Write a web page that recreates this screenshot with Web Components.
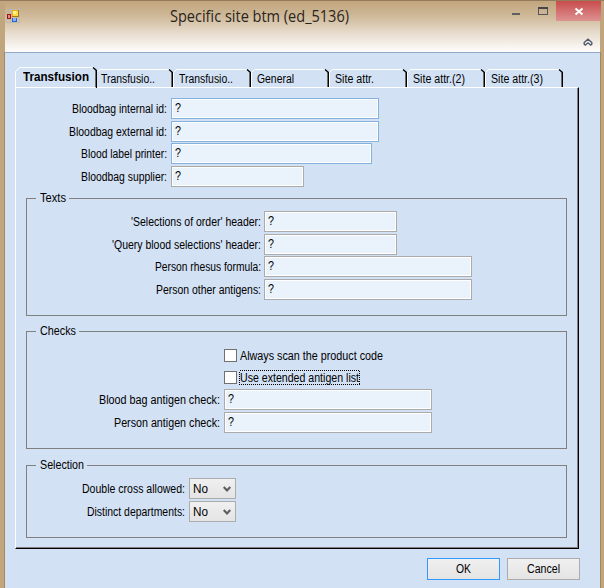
<!DOCTYPE html>
<html lang="en">
<head>
<meta charset="utf-8">
<title>Specific site btm</title>
<style>
html,body{margin:0;padding:0}
body{width:604px;height:588px;overflow:hidden;font:12px/15px "Liberation Sans",Roboto,sans-serif;color:#000}
</style>
</head>
<body>
<app-window></app-window>
<script>
const define=(name,html,init)=>customElements.define(name,class extends HTMLElement{
  constructor(){super();this.attachShadow({mode:'open'});}
  connectedCallback(){
    if(this.shadowRoot.childNodes.length)return;
    const t=document.createElement('template');
    t.innerHTML=typeof html==='function'?html(this):html;
    this.shadowRoot.append(t.content.cloneNode(true));
    if(init)init(this);
  }
});

/* Text condensed or widened to a given pixel width */
define('fit-text',el=>`<style>
:host{display:inline-block;flex:none;white-space:nowrap;text-align:left}
span{display:inline-block;transform-origin:0 50%}
</style><span>${el.getAttribute('text')}</span>`,el=>{
  const s=el.shadowRoot.querySelector('span'),w=+el.getAttribute('w');
  const n=s.getBoundingClientRect().width;
  el.style.width=w+'px';
  s.style.transform=`scaleX(${w/n})`;
});

define('app-icon',`<style>:host{display:block;width:14px;height:14px}svg{display:block}</style>
<svg width="14" height="14" shape-rendering="crispEdges">
<path d="M.5 .5h13v13H.5zM.5 10.5h5M4.500 .5v13" fill="none" stroke="#bdb9b4"/>
<rect x="1" y="5" width="4" height="5" fill="#a81010"/><rect x="2" y="6" width="2" height="3" fill="#e88a78"/>
<rect x="6" y="1" width="7" height="7" fill="#a87908"/><rect x="6" y="1" width="6" height="6" fill="#e9b010"/><rect x="7" y="2" width="5" height="5" fill="#ffdc4a"/><rect x="7" y="2" width="3" height="3" fill="#fff09a"/>
<rect x="6" y="9" width="5" height="4" fill="#2f62c8"/><rect x="7" y="9" width="3" height="3" fill="#85b2f6"/>
</svg>`);

define('title-bar',`<style>
:host{display:grid;grid-template-columns:155px 1fr 97px;height:51px;background:linear-gradient(#c1a57d,#cfb999 30%,#e9dfd2 66%,#fefdfc)}
app-icon{margin:8px 0 0 1px}
.t{font:16px/22px "Open Sans","Noto Sans",sans-serif;color:#2a241d;padding:4px 0 0 10px}
.c{display:grid;grid-template-columns:1fr 45px;grid-template-rows:20px 31px;margin-right:-1px}
.x{background:linear-gradient(#c94b4c,#dd9392)}
svg{display:block}
.up{grid-column:2;justify-self:end;margin:17px 8px 0 0}
</style>
<app-icon></app-icon><div class="t"><fit-text w="179" text="Specific site btm (ed_5136)"></fit-text></div>
<div class="c">
<svg width="50" height="20" shape-rendering="crispEdges"><path d="M9 12h8v2H9z" fill="#5f5f61"/><rect x="35.500" y="6.500" width="9" height="7" fill="none" stroke="#55565a"/><path d="M35 6h10v2H35z" fill="#45464a"/></svg>
<svg class="x" width="45" height="20"><path d="M19.500 7.500l7 6M26.500 7.500l-7 6" stroke="#fff" stroke-width="2"/></svg>
<svg class="up" width="10" height="8"><path d="M1.200 4.500L5 1.200l3.800 3.300v1.700L7.700 7 5 4.800 2.300 7 1.200 6.200z" fill="#eef2f7" stroke="#505a66" stroke-width="1.400"/></svg>
</div>`);

/* Tab with a light left/top edge and a dark right edge */
define('tab-item',el=>{
  const a=el.hasAttribute('active'),f=el.hasAttribute('first'),w=+el.getAttribute('width'),h=a?21:19;
  const left=a?`M.5 ${h}V4.500L4.500 .5H${w-4}`:`M${f?'0.5 2.500':'.5 '+(h-1)+'V3.500'}L3.500 .5H${w-4}`;
  return `<style>
:host{display:grid;width:${w}px;height:${h}px;flex:none}
svg,div{grid-area:1/1}svg{display:block}
div{padding:3px 0 0 ${a?8:f?4:6}px;${a?'font-weight:700':''}}
</style><svg width="${w}" height="${h}"><path d="${left}" fill="none" stroke="#fff"/>
<path d="M${w-1.500} ${h-1}V3" stroke="#808080"/><path d="M${w-4} .5L${w-.5} 3.500V${a?h:h-1}" fill="none" stroke="#000" stroke-width="1.300"/></svg>
<div><fit-text w="${el.getAttribute('tw')}" text="${el.getAttribute('text')}"></fit-text></div>`;});

define('tab-strip',`<style>:host{display:flex;align-items:flex-end;height:21px;margin-bottom:-1px;position:relative}</style><slot></slot>`);

define('text-field',el=>`<style>
:host{display:block;box-sizing:border-box;flex:none;height:21px;width:${el.getAttribute('width')}px;border:1px solid ${el.hasAttribute('blue')?'#86b1dd':'#ababab'};background:#eaf2fc;box-shadow:inset 0 0 0 1px #fff;padding:1px 0 0 3px;line-height:16px}
</style><fit-text w="6" text="?"></fit-text>`);

define('drop-down',`<style>
:host{display:flex;box-sizing:border-box;flex:none;width:47px;height:21px;border:1px solid #acacac;background:linear-gradient(#f0f0f0,#e4e4e4);padding:3px 4px 0 3px;justify-content:space-between}
svg{margin-top:4px}
</style><fit-text w="15" text="No"></fit-text><svg width="8" height="7"><path d="M.7 1L4 4.500 7.300 1" fill="none" stroke="#5c5c5c" stroke-width="2.200"/></svg>`);

define('form-row',el=>`<style>
:host{display:grid;grid-template-columns:${el.getAttribute('col')}px auto;column-gap:4px;height:21px;justify-content:start}
div{text-align:right;padding-top:4px}
</style><div><fit-text w="${el.getAttribute('lw')}" text="${el.getAttribute('label')}"></fit-text></div><slot></slot>`);

define('form-rows',`<style>
:host{display:grid;row-gap:2px}
::slotted(:nth-of-type(3)){margin-top:-1px}
</style><slot></slot>`);

define('group-box',el=>`<style>
:host{display:block;box-sizing:border-box;border:1px solid #808080}
.l{height:15px;margin:-8px 0 0 9px;display:flex}
.l span{background:#d3e1f4;padding:0 3px 0 4px;display:block}
</style><div class="l"><span><fit-text w="${el.getAttribute('lw')}" text="${el.getAttribute('label')}"></fit-text></span></div><slot></slot>`);

define('check-box',el=>`<style>
:host{display:flex;height:15px;align-items:center}
i{box-sizing:border-box;width:13px;height:13px;background:#fff;border:1px solid #707070;margin-right:2px}
div{box-sizing:border-box;width:121px;height:15px;padding:1px 0 0 1px;display:grid;position:relative}
svg{position:absolute;left:0;top:0}
</style><i></i><div>${el.hasAttribute('focused')?'<svg width="121" height="15"><rect x=".5" y=".5" width="120" height="14" fill="none" stroke="#000" stroke-dasharray="1 1" shape-rendering="crispEdges"/></svg>':''}<fit-text w="${el.getAttribute('lw')}" text="${el.getAttribute('label')}"></fit-text></div>`);

define('push-button',el=>`<style>
:host{display:flex;justify-content:center;box-sizing:border-box;width:73px;height:22px;padding-top:3px;border:1px solid ${el.hasAttribute('primary')?'#3399ff':'#acacac'};background:linear-gradient(#f0f0f0,#e4e4e4)}
</style><fit-text w="${el.getAttribute('lw')}" text="${el.getAttribute('label')}"></fit-text>`);

define('tab-panel',`<style>
:host{display:block;box-sizing:border-box;width:564px;height:462px;border:1px solid;border-color:#fff #000 #000 #fff;box-shadow:inset -1px -1px #808080;padding:10px 11px 0 10px}
group-box.a{height:118px;margin-top:11px}
group-box.b{height:118px;margin-top:15px}
group-box.c{height:73px;margin-top:16px}
.a form-rows{margin-top:5px}
.checks{display:grid;row-gap:7px;padding:9px 0 4px 197px}
.c form-rows{margin-top:5px}
</style>
<form-rows>
<form-row col="141" lw="95" label="Bloodbag internal id:"><text-field blue width="208"></text-field></form-row>
<form-row col="141" lw="98" label="Bloodbag external id:"><text-field blue width="208"></text-field></form-row>
<form-row col="141" lw="86" label="Blood label printer:"><text-field blue width="201"></text-field></form-row>
<form-row col="141" lw="86" label="Bloodbag supplier:"><text-field width="133"></text-field></form-row>
</form-rows>
<group-box class="a" label="Texts" lw="26"><form-rows>
<form-row col="234" lw="130" label="'Selections of order' header:" style="column-gap:3px"><text-field width="133"></text-field></form-row>
<form-row col="234" lw="149" label="'Query blood selections' header:" style="column-gap:3px"><text-field width="133"></text-field></form-row>
<form-row col="234" lw="106" label="Person rhesus formula:" style="column-gap:3px"><text-field width="208"></text-field></form-row>
<form-row col="234" lw="105" label="Person other antigens:" style="column-gap:3px"><text-field width="208"></text-field></form-row>
</form-rows></group-box>
<group-box class="b" label="Checks" lw="36">
<div class="checks"><check-box label="Always scan the product code" lw="143"></check-box><check-box focused label="Use extended antigen list" lw="119"></check-box></div>
<form-rows>
<form-row col="193" lw="121" label="Blood bag antigen check:"><text-field width="208"></text-field></form-row>
<form-row col="193" lw="106" label="Person antigen check:"><text-field width="208"></text-field></form-row>
</form-rows></group-box>
<group-box class="c" label="Selection" lw="44"><form-rows>
<form-row col="158" lw="103" label="Double cross allowed:"><drop-down></drop-down></form-row>
<form-row col="158" lw="98" label="Distinct departments:"><drop-down></drop-down></form-row>
</form-rows></group-box>`);

define('app-window',`<style>
:host{display:grid;box-sizing:border-box;width:604px;height:588px;grid-template-rows:51px 1fr;background:#c1a57d;border-top:1px solid #957b5e}
title-bar{margin:0 4px 0 5px}
.body{box-sizing:border-box;margin:0 3px 0 4px;border:solid #a48762;border-width:0 1px;background:#d3e1f4;box-shadow:inset 0 1px #94a9c8;padding:15px 0 0 10px}
.actions{display:flex;gap:7px;margin:9px 0 0 412px}
</style>
<title-bar></title-bar>
<div class="body">
<tab-strip>
<tab-item active width="82" text="Transfusion" tw="66"></tab-item>
<tab-item first width="76" text="Transfusio.." tw="54"></tab-item>
<tab-item width="78" text="Transfusio.." tw="54"></tab-item>
<tab-item width="78" text="General" tw="37"></tab-item>
<tab-item width="78" text="Site attr." tw="39"></tab-item>
<tab-item width="78" text="Site attr.(2)" tw="52"></tab-item>
<tab-item width="78" text="Site attr.(3)" tw="52"></tab-item>
</tab-strip>
<tab-panel></tab-panel>
<div class="actions"><push-button primary label="OK" lw="15"></push-button><push-button label="Cancel" lw="33"></push-button></div>
</div>`);
</script>
</body>
</html>
